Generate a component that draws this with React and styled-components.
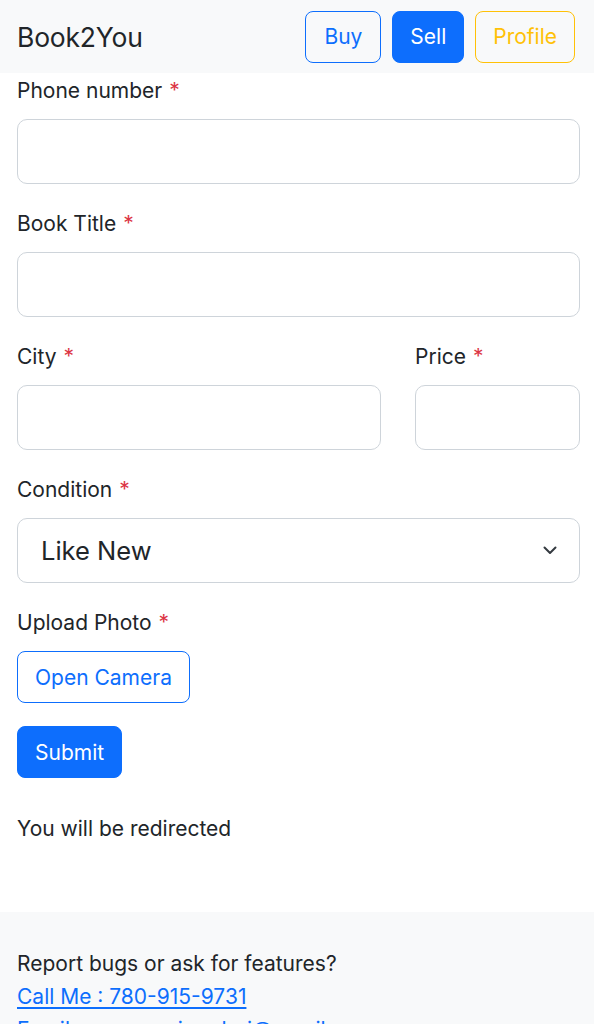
import React from 'react'
import styled, { createGlobalStyle } from 'styled-components'

const GlobalStyle = createGlobalStyle`
  html, body {
    margin: 0;
    padding: 0;
    background: #fff;
    font-family: Inter, "Liberation Sans", sans-serif;
    color: #212529;
  }
  * { box-sizing: border-box; }
`

const Page = styled.div`
  width: 594px;
  height: 1024px;
  overflow: hidden;
  display: flex;
  flex-direction: column;
`

const Navbar = styled.header`
  height: 73px;
  flex-shrink: 0;
  background: #f8f9fa;
  display: flex;
  align-items: center;
  justify-content: space-between;
  padding: 0 19px 0 17px;
`

const Brand = styled.span`
  font-size: 26.5px;
  letter-spacing: -0.2px;
  color: #212529;
`

const NavButtons = styled.nav`
  display: flex;
  gap: 11px;
`

const variants = {
  outline: { color: '#0d6efd', border: '#0d6efd', bg: 'transparent' },
  primary: { color: '#fff', border: '#0d6efd', bg: '#0d6efd' },
  warning: { color: '#ffc107', border: '#ffc107', bg: 'transparent' },
}

const Button = styled.button`
  height: 52px;
  padding: 0 ${(p) => p.$pad || 17}px;
  border-radius: 8px;
  font-family: inherit;
  font-size: 21px;
  border: 1.5px solid ${(p) => variants[p.$variant].border};
  background: ${(p) => variants[p.$variant].bg};
  color: ${(p) => variants[p.$variant].color};
  cursor: pointer;
`

const Form = styled.form`
  padding: 3px 14px 0 17px;
  display: flex;
  flex-direction: column;
`

const Row = styled.div`
  display: grid;
  grid-template-columns: 364px 165px;
  column-gap: 34px;
`

const Field = styled.div`
  display: flex;
  flex-direction: column;
  margin-bottom: ${(p) => p.$mb ?? 25}px;
`

const Label = styled.label`
  font-size: 21px;
  line-height: 30px;
  margin-bottom: 13px;
  color: #212529;
`

const Star = styled.span`
  color: #dc3545;
  margin-left: 7px;
`

const Input = styled.input`
  height: 65px;
  width: 100%;
  border: 1.5px solid #ced4da;
  border-radius: 10px;
  background: #fff;
  font-family: inherit;
  font-size: 25px;
  padding: 0 23px;
`

const SelectBox = styled.div`
  position: relative;
  height: 65px;
  border: 1.5px solid #ced4da;
  border-radius: 10px;
  display: flex;
  align-items: center;
  padding: 0 23px;
  font-size: 25.5px;
  color: #212529;

  svg {
    position: absolute;
    right: 22px;
    top: 27px;
  }
`

const Note = styled.p`
  margin: 36px 0 0;
  font-size: 21px;
  line-height: 30px;
`

const Footer = styled.footer`
  margin-top: 68px;
  flex: 1;
  background: #f8f9fa;
  padding: 35px 17px 0;
  font-size: 21px;
  line-height: 33px;
`

const FooterLink = styled.a`
  display: block;
  color: #0d6efd;
  text-decoration: underline;
  text-underline-offset: 3px;
`

const Required = ({ children }) => (
  <Label>
    {children}
    <Star>*</Star>
  </Label>
)

export default function App() {
  return (
    <Page>
      <GlobalStyle />
      <Navbar>
        <Brand>Book2You</Brand>
        <NavButtons>
          <Button $variant="outline" $pad={18}>Buy</Button>
          <Button $variant="primary">Sell</Button>
          <Button $variant="warning">Profile</Button>
        </NavButtons>
      </Navbar>
      <Form onSubmit={(e) => e.preventDefault()}>
        <Field>
          <Required>Phone number</Required>
          <Input type="tel" />
        </Field>
        <Field>
          <Required>Book Title</Required>
          <Input type="text" />
        </Field>
        <Row>
          <Field>
            <Required>City</Required>
            <Input type="text" />
          </Field>
          <Field>
            <Required>Price</Required>
            <Input type="text" />
          </Field>
        </Row>
        <Field>
          <Required>Condition</Required>
          <SelectBox>
            Like New
            <svg width="14" height="9" viewBox="0 0 14 9" fill="none">
              <path d="M1.5 1.5L7 7l5.5-5.5" stroke="#343a40" strokeWidth="2" strokeLinecap="round" strokeLinejoin="round" />
            </svg>
          </SelectBox>
        </Field>
        <Field $mb={23}>
          <Required>Upload Photo</Required>
          <div>
            <Button type="button" $variant="outline">Open Camera</Button>
          </div>
        </Field>
        <div>
          <Button type="submit" $variant="primary">Submit</Button>
        </div>
        <Note>You will be redirected</Note>
      </Form>
      <Footer>
        <div>Report bugs or ask for features?</div>
        <FooterLink href="#">Call Me : 780-915-9731</FooterLink>
        <FooterLink href="#">Email : sunnymajumderi@gmail.com</FooterLink>
      </Footer>
    </Page>
  )
}
